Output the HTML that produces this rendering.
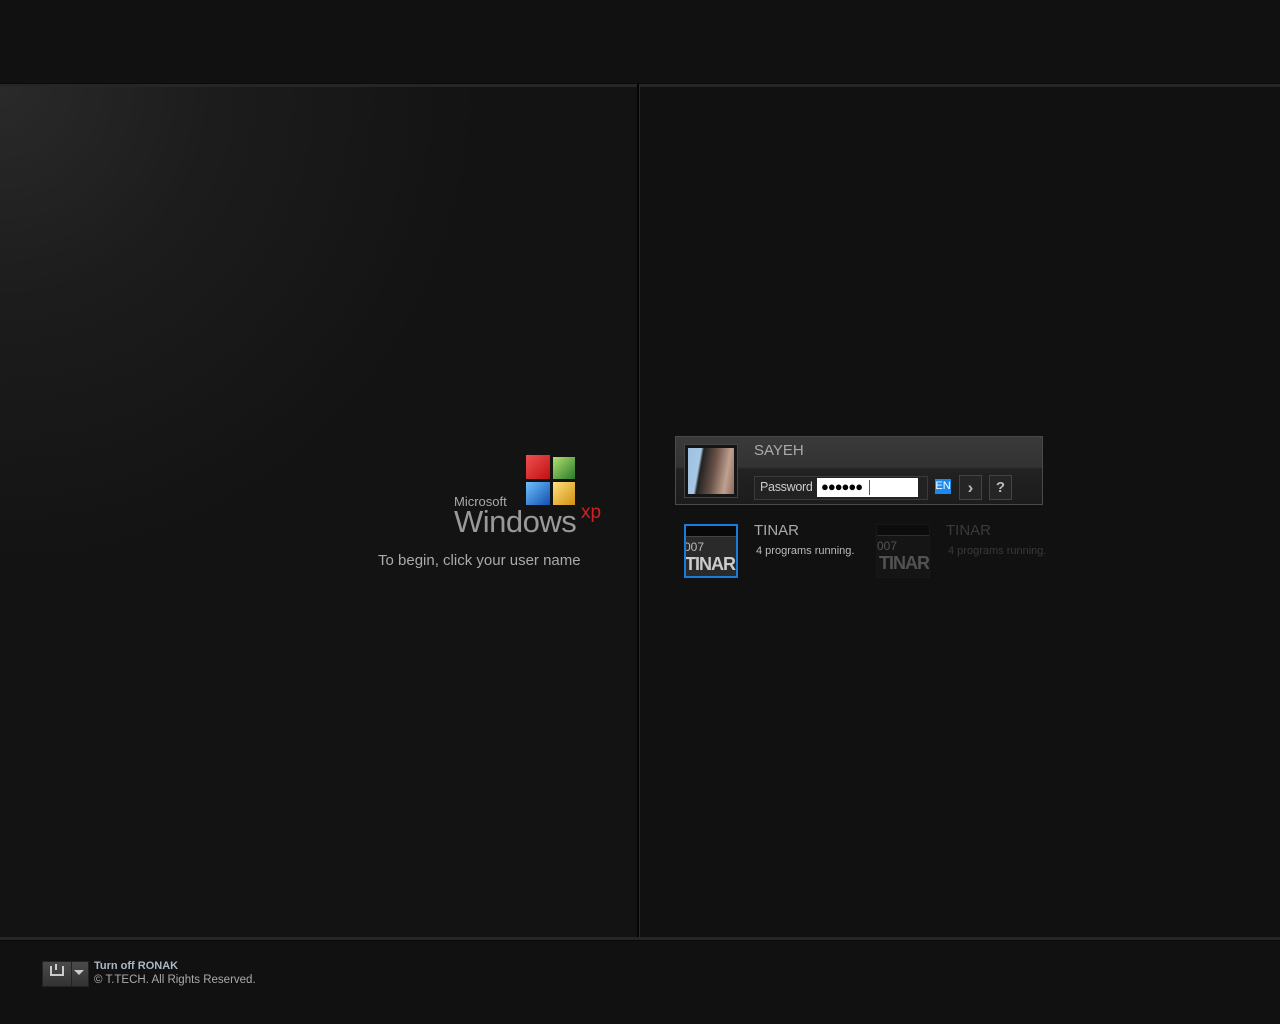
<!DOCTYPE html>
<html><head><style>
body{margin:0;width:1280px;height:1024px;background:#111;position:relative;overflow:hidden;font-family:"Liberation Sans","DejaVu Sans",sans-serif;}
.a{position:absolute}
</style></head><body>
<div class="a" style="left:0;top:0;width:1280px;height:83px;background:#111"></div>
<div class="a" style="left:0;top:83px;width:1280px;height:3px;background:#262626;border-top:1px solid #0a0a0a"></div>
<div class="a" style="left:0;top:87px;width:637px;height:850px;background:radial-gradient(ellipse 480px 480px at 0 0,#2a2a2a 0%,#1c1c1c 45%,#131313 100%)"></div>
<div class="a" style="left:637px;top:83px;width:2px;height:857px;background:#050505"></div>
<div class="a" style="left:639px;top:86px;width:1px;height:852px;background:#2a2a2a"></div>
<div class="a" style="left:0;top:937px;width:1280px;height:3px;background:#262626;border-bottom:1px solid #0a0a0a"></div>

<!-- logo -->
<div class="a" style="left:526px;top:455px;width:24px;height:24px;background:linear-gradient(135deg,#f05050,#c01010)"></div>
<div class="a" style="left:553px;top:457px;width:22px;height:22px;background:linear-gradient(135deg,#b0e070,#2a7a2a)"></div>
<div class="a" style="left:526px;top:482px;width:24px;height:23px;background:linear-gradient(135deg,#70c0ff,#1050b0)"></div>
<div class="a" style="left:553px;top:482px;width:22px;height:23px;background:linear-gradient(135deg,#ffe080,#d09010)"></div>
<div class="a" style="left:454px;top:494px;color:#aaa;font-size:13px">Microsoft</div>
<div class="a" style="left:454px;top:504px;color:#999;font-size:31px;letter-spacing:-0.5px">Windows</div>
<div class="a" style="left:581px;top:502px;color:#d02020;font-size:19px">xp</div>
<div class="a" style="left:378px;top:552px;color:#aaa;font-size:15px">To begin, click your user name</div>

<!-- user box -->
<div class="a" style="left:675px;top:436px;width:366px;height:67px;border:1px solid #4a4a4a;background:linear-gradient(#3a3a3a 0,#333 30px,#222 32px,#1c1c1c 100%)"></div>
<div class="a" style="left:684px;top:444px;width:52px;height:52px;background:#151515;border:1px solid #444"></div>
<div class="a" style="left:688px;top:448px;width:46px;height:46px;background:linear-gradient(100deg,#9cc0e0 0%,#a8c8e4 25%,#222 30%,#6a5248 55%,#c0a090 80%,#8a6a5a 100%)"></div>
<div class="a" style="left:754px;top:442px;color:#aaa;font-size:15px">SAYEH</div>
<div class="a" style="left:754px;top:476px;width:172px;height:22px;background:#222;border:1px solid #3a3a3a"></div>
<div class="a" style="left:760px;top:480px;color:#ccc;font-size:12.5px;letter-spacing:-0.3px">Password</div>
<div class="a" style="left:817px;top:478px;width:101px;height:19px;background:#fff"></div>
<div class="a" style="left:821px;top:479px;color:#000;font-size:13px;letter-spacing:-1px">●●●●●●</div>
<div class="a" style="left:869px;top:480px;width:1px;height:15px;background:#06f"></div>
<div class="a" style="left:935px;top:479px;width:16px;height:15px;background:#1b8af0;color:#fff;font-size:11px;line-height:15px;text-align:center">EN</div>
<div class="a" style="left:959px;top:475px;width:21px;height:23px;border:1px solid #444;background:#252525;color:#bbb;font-size:17px;font-weight:bold;text-align:center;line-height:23px">›</div>
<div class="a" style="left:989px;top:475px;width:21px;height:23px;border:1px solid #444;background:#252525;color:#bbb;font-size:15px;font-weight:bold;text-align:center;line-height:23px">?</div>

<!-- tinar tiles -->
<div class="a" style="left:684px;top:524px;width:50px;height:50px;border:2px solid #1a7ae0;background:#2a2a2a;overflow:hidden">
<div style="height:10px;background:#080808;border-bottom:1px solid #444"></div>
<div style="color:#bbb;font-size:12px;margin-top:3px;margin-left:-2px">007</div>
<div style="color:#ccc;font-size:18px;font-weight:bold;letter-spacing:-1px;margin-left:-1px">TINAR</div></div>
<div class="a" style="left:754px;top:522px;color:#aaa;font-size:15px">TINAR</div>
<div class="a" style="left:756px;top:545px;color:#bbb;font-size:11px">4 programs running.</div>
<div class="a" style="left:876px;top:524px;width:52px;height:52px;border:1px solid #1e1e1e;background:#1a1a1a;overflow:hidden;opacity:.55">
<div style="height:10px;background:#080808;border-bottom:1px solid #444"></div>
<div style="color:#888;font-size:12px;margin-top:3px;margin-left:0">007</div>
<div style="color:#888;font-size:18px;font-weight:bold;letter-spacing:-1px;margin-left:2px">TINAR</div></div>
<div class="a" style="left:946px;top:522px;color:#3a3a3a;font-size:15px">TINAR</div>
<div class="a" style="left:948px;top:545px;color:#3a3a3a;font-size:11px">4 programs running.</div>

<!-- bottom -->
<div class="a" style="left:42px;top:961px;width:28px;height:24px;background:linear-gradient(#4a4a4a,#333);border:1px solid #222"></div>
<div class="a" style="left:50px;top:966px;width:10px;height:8px;border:2px solid #ccc;border-top:none"></div>
<div class="a" style="left:55px;top:964px;width:2px;height:6px;background:#ccc"></div>
<div class="a" style="left:71px;top:961px;width:16px;height:24px;background:linear-gradient(#4a4a4a,#333);border:1px solid #222"></div>
<div class="a" style="left:74px;top:970px;width:0;height:0;border-left:5px solid transparent;border-right:5px solid transparent;border-top:5px solid #ccc"></div>
<div class="a" style="left:94px;top:960px;color:#aab8c8;font-size:11px;font-weight:bold">Turn off RONAK</div>
<div class="a" style="left:94px;top:974px;color:#aaa;font-size:11.5px">© T.TECH. All Rights Reserved.</div>
</body></html>
